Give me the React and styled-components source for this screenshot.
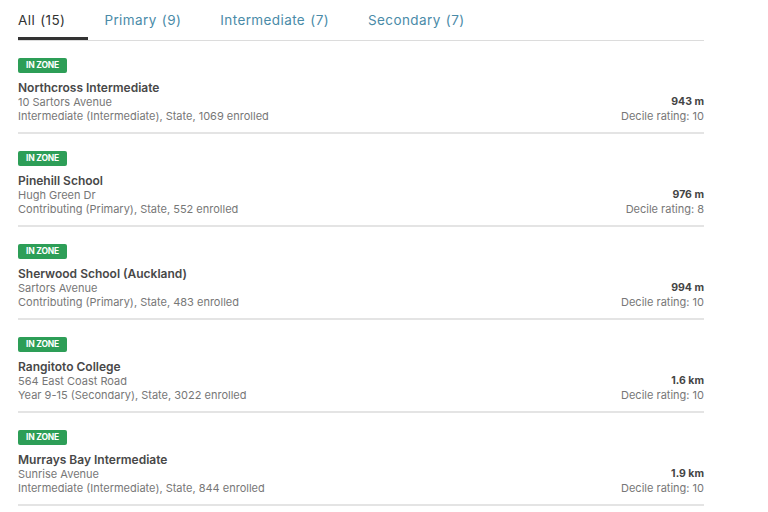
import React from "react";
import styled, { createGlobalStyle } from "styled-components";

const GlobalStyle = createGlobalStyle`
  body {
    margin: 0;
    background: #fff;
    font-family: Inter, "Open Sans", Arial, sans-serif;
  }
`;

const schools = [
  {
    name: "Northcross Intermediate",
    address: "10 Sartors Avenue",
    info: "Intermediate (Intermediate), State, 1069 enrolled",
    distance: "943 m",
    decile: 10,
  },
  {
    name: "Pinehill School",
    address: "Hugh Green Dr",
    info: "Contributing (Primary), State, 552 enrolled",
    distance: "976 m",
    decile: 8,
  },
  {
    name: "Sherwood School (Auckland)",
    address: "Sartors Avenue",
    info: "Contributing (Primary), State, 483 enrolled",
    distance: "994 m",
    decile: 10,
  },
  {
    name: "Rangitoto College",
    address: "564 East Coast Road",
    info: "Year 9-15 (Secondary), State, 3022 enrolled",
    distance: "1.6 km",
    decile: 10,
  },
  {
    name: "Murrays Bay Intermediate",
    address: "Sunrise Avenue",
    info: "Intermediate (Intermediate), State, 844 enrolled",
    distance: "1.9 km",
    decile: 10,
  },
];

const tabs = ["All (15)", "Primary (9)", "Intermediate (7)", "Secondary (7)"];

class App extends React.Component {
  render() {
    return (
      <Page>
        <GlobalStyle />
        <TabBar>
          {tabs.map((t, i) => (
            <Tab key={t} active={i === 0}>
              {t}
            </Tab>
          ))}
        </TabBar>
        <List>
          {schools.map((s) => (
            <Row key={s.name}>
              <Badge>IN ZONE</Badge>
              <Body>
                <Left>
                  <Name>{s.name}</Name>
                  <Meta>{s.address}</Meta>
                  <Meta>{s.info}</Meta>
                </Left>
                <Right>
                  <Distance>{s.distance}</Distance>
                  <Meta>Decile rating: {s.decile}</Meta>
                </Right>
              </Body>
            </Row>
          ))}
        </List>
      </Page>
    );
  }
}
export default App;

const Page = styled.div`
  width: 686px;
  padding: 0 0 0 18px;
`;

const TabBar = styled.div`
  display: flex;
  gap: 16px;
  border-bottom: 1px solid #dcdcdc;
  height: 40px;
`;

const Tab = styled.div`
  padding: 12px 23px 0 0;
  font-size: 13.5px;
  letter-spacing: 0.4px;
  word-spacing: 1px;
  color: ${(p) => (p.active ? "#333" : "#4a8ba8")};
  box-shadow: ${(p) => (p.active ? "inset 0 -3px 0 #333" : "none")};
  height: 28px;
`;

const List = styled.div`
  display: flex;
  flex-direction: column;
`;

const Row = styled.div`
  display: flex;
  flex-direction: column;
  align-items: flex-start;
  padding: 17px 0 9px;
  border-bottom: 2px solid #e4e4e4;
`;

const Badge = styled.span`
  background: #2d9e57;
  color: #fff;
  font-size: 8.5px;
  font-weight: 700;
  letter-spacing: -0.2px;
  border-radius: 2px;
  width: 49px;
  height: 15px;
  line-height: 15px;
  text-align: center;
`;

const Body = styled.div`
  display: flex;
  justify-content: space-between;
  align-items: flex-end;
  width: 100%;
  margin-top: 7px;
`;

const Left = styled.div`
  display: flex;
  flex-direction: column;
`;

const Right = styled.div`
  display: flex;
  flex-direction: column;
  align-items: flex-end;
`;

const Name = styled.div`
  font-size: 12px;
  font-weight: 600;
  color: #484848;
  line-height: 15px;
`;

const Meta = styled.div`
  font-size: 11px;
  color: #777;
  line-height: 14px;
`;

const Distance = styled.div`
  font-size: 10.5px;
  font-weight: 700;
  color: #444;
  line-height: 14px;
`;
